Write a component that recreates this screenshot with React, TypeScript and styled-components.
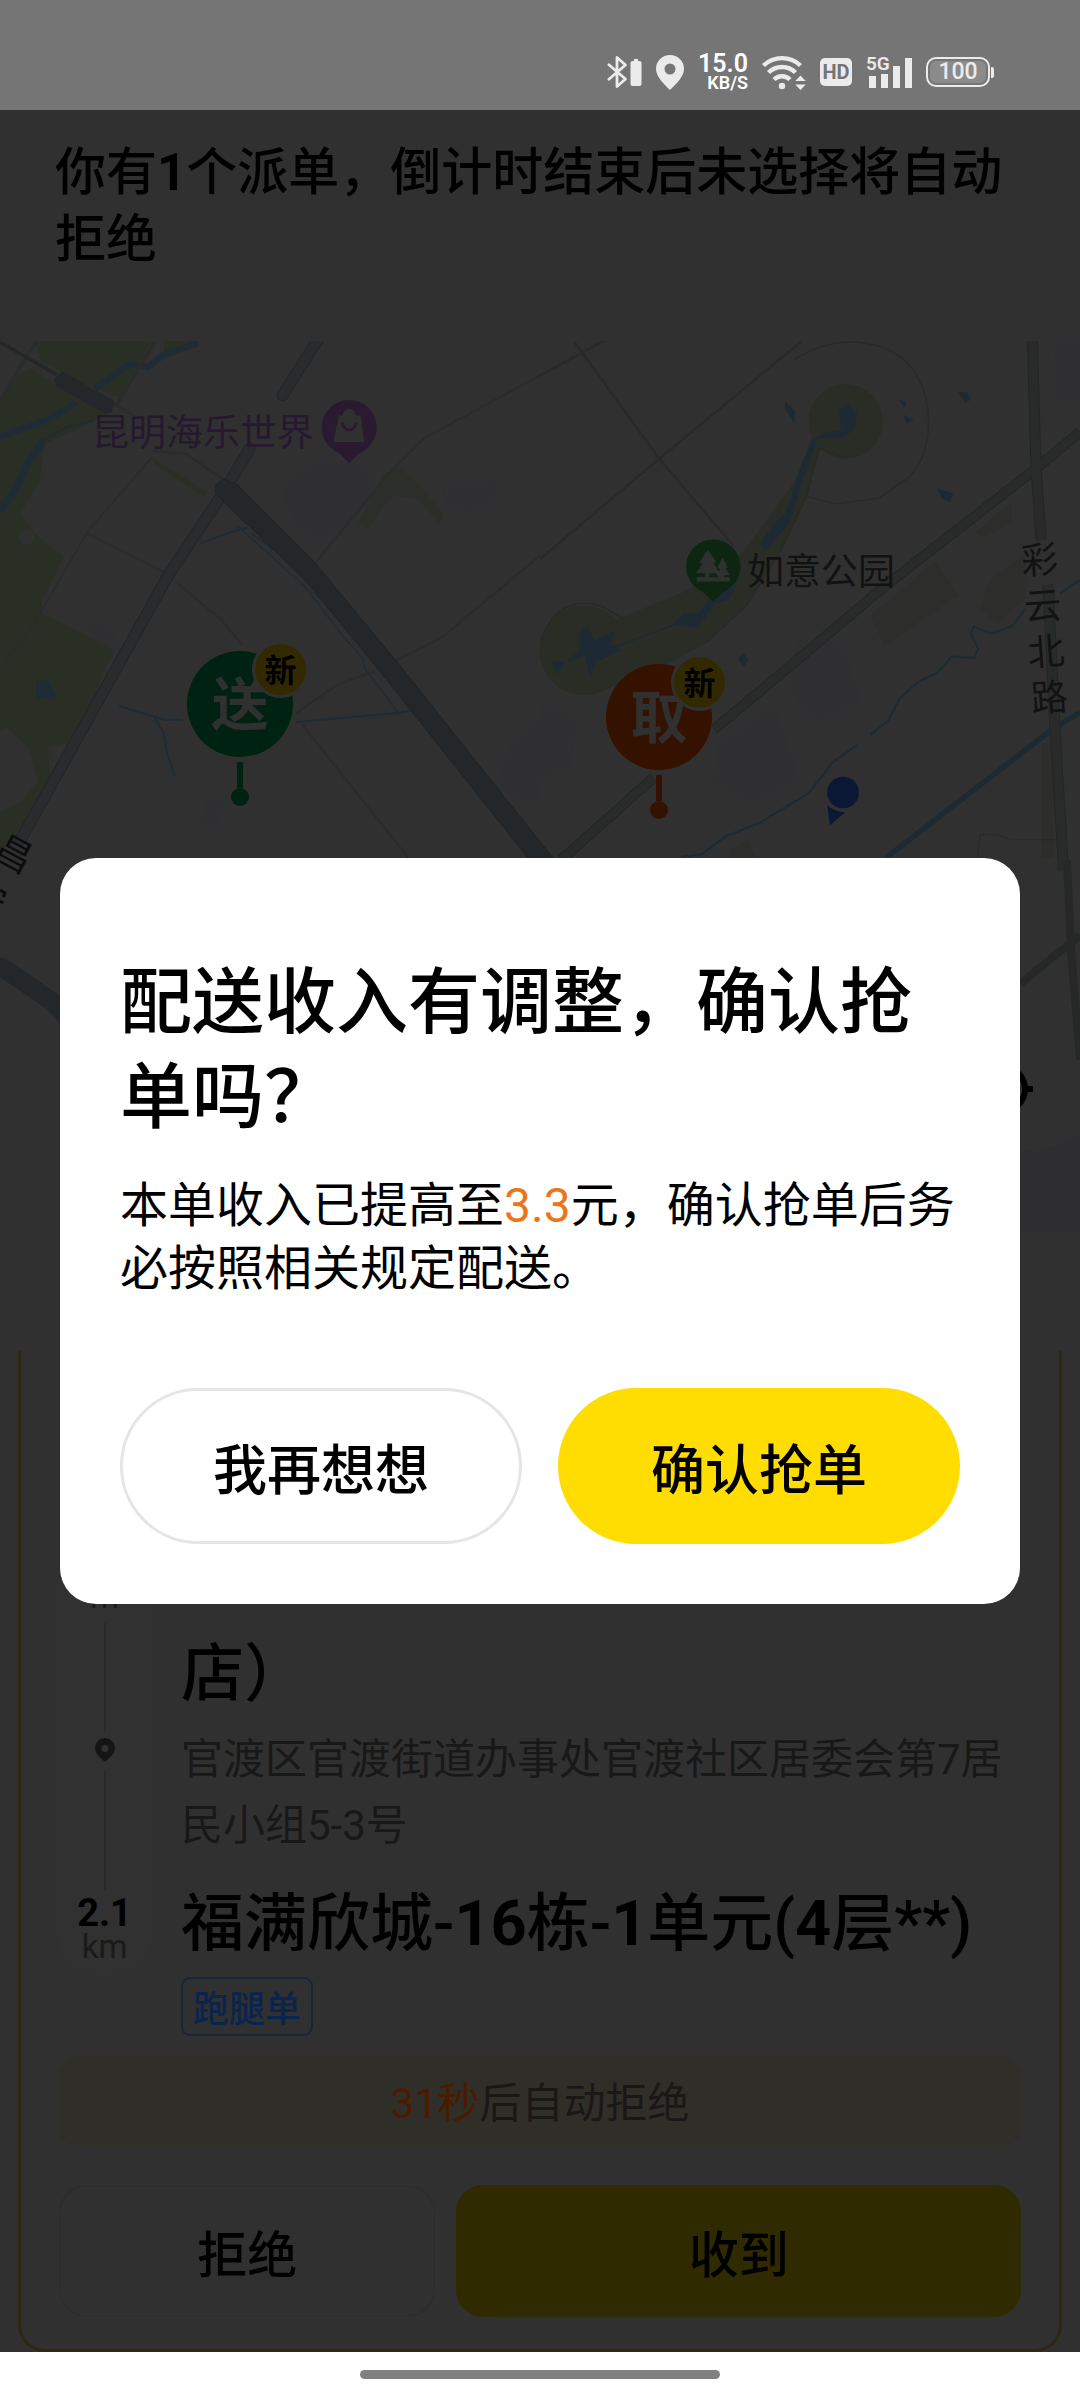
import React from 'react';
import styled, { createGlobalStyle } from 'styled-components';

const MIXED = `Roboto, "Noto Sans CJK SC", sans-serif`;
const CJK = `"Noto Sans CJK SC", sans-serif`;

const GlobalStyle = createGlobalStyle`
  *, *::before, *::after { box-sizing: border-box; }
  body { margin: 0; background: #fff; font-family: ${MIXED}; color: #000; }
  h1, h2, h3, p { margin: 0; }
  button { font: inherit; color: inherit; padding: 0; cursor: pointer; }
`;

const Screen = styled.div`
  display: flex;
  flex-direction: column;
  min-height: 100vh;
`;

/* ---------- status bar ---------- */

const StatusBar = styled.header`
  display: flex;
  align-items: center;
  justify-content: flex-end;
  gap: 14px;
  height: 110px;
  padding: 34px 86px 0 0;
  background: #757575;
  color: #ebebeb;
`;

const Speed = styled.div`
  display: flex;
  flex-direction: column;
  align-items: flex-end;
  font-weight: 600;
  font-size: 25px;
  line-height: 22px;
  color: #fff;
`;

const SpeedUnit = styled.span`
  font-size: 18px;
  line-height: 16px;
`;

const HdBadge = styled.span`
  width: 32px;
  border-radius: 5px;
  background: #ebebeb;
  color: #757575;
  font-size: 20px;
  font-weight: 700;
  line-height: 28px;
  text-align: center;
`;

const Signal = styled.span`
  position: relative;
  display: flex;
  width: 46px;
  height: 32px;
`;

const Network = styled.span`
  position: absolute;
  left: 0;
  top: 0;
  font-size: 19px;
  font-weight: 600;
  line-height: 16px;
`;

const Battery = styled.span`
  position: relative;
  width: 64px;
  margin-right: 4px;
  border: 2px solid #ebebeb;
  border-radius: 10px;
  background: #8b8b8b;
  box-shadow: inset 0 0 0 2px #757575;
  font-size: 23px;
  font-weight: 500;
  line-height: 26px;
  text-align: center;

  &::after {
    content: '';
    position: absolute;
    right: -6px;
    top: 8px;
    width: 3px;
    height: 11px;
    border-radius: 0 2px 2px 0;
    background: #ebebeb;
  }
`;

/* ---------- page below the dialog ---------- */

const Main = styled.main`
  position: relative;
  display: flex;
  flex: 1;
  flex-direction: column;
  background: #303030;
`;

const Digits = styled.b`
  font-weight: 700;
`;

const Notice = styled.h1`
  padding: 29px 55px 68px;
  font-size: 51px;
  font-weight: 500;
  line-height: 67px;
`;

const MapArea = styled.section`
  position: relative;
  height: 891px;
  overflow: hidden;
  background: #303030;
`;

const MapDrawing = styled.svg`
  display: block;
  width: 100%;
  height: 100%;
`;

const MapLabel = styled.span<{ $x: number; $y: number; $color: string }>`
  position: absolute;
  left: ${(p) => p.$x}px;
  top: ${(p) => p.$y}px;
  color: ${(p) => p.$color};
  font-size: 37px;
  line-height: 44px;
  white-space: nowrap;
`;

const RoadLabel = styled(MapLabel)<{ $turn: number }>`
  width: 37px;
  line-height: 46px;
  white-space: normal;
  word-break: break-all;
  transform: rotate(${(p) => p.$turn}deg);
`;

const Pin = styled.div<{ $x: number; $y: number; $color: string }>`
  position: absolute;
  left: ${(p) => p.$x}px;
  top: ${(p) => p.$y}px;
  display: flex;
  flex-direction: column;
  align-items: center;
  color: ${(p) => p.$color};
`;

const PinHead = styled.span`
  width: 106px;
  height: 106px;
  margin-bottom: 5px;
  border-radius: 50%;
  background: currentColor;
  font-family: ${CJK};
  font-size: 57px;
  font-weight: 700;
  line-height: 98px;
  text-align: center;
`;

const PinLetter = styled.span`
  color: #303030;
`;

const PinStem = styled.span`
  width: 6px;
  height: 26px;
  background: currentColor;
`;

const PinDot = styled.span`
  width: 18px;
  height: 18px;
  border-radius: 50%;
  background: currentColor;
`;

const NewBadge = styled.span`
  position: absolute;
  left: 65px;
  top: -10px;
  width: 57px;
  height: 57px;
  border: 3px solid #303030;
  border-radius: 50%;
  background: #332900;
  color: #000;
  font-family: ${CJK};
  font-size: 32px;
  font-weight: 700;
  line-height: 48px;
  text-align: center;
`;

const OrderCard = styled.section`
  display: flex;
  flex: 1;
  flex-direction: column;
  justify-content: flex-end;
  margin: 119px 18px 0;
  padding: 0 36px 32px;
  border: 3px solid #2d2812;
  border-top: 0;
  border-radius: 0 0 27px 27px;
`;

const Route = styled.div`
  display: flex;
  gap: 29px;
`;

const Track = styled.div`
  display: flex;
  flex-direction: column;
  align-items: center;
  width: 95px;
  margin-bottom: 61px;
  padding-bottom: 11px;
  border-radius: 0 0 40px 40px;
  background: #313131;
`;

const TrackLine = styled.span<{ $length: number }>`
  flex: ${(p) => p.$length};
  width: 2px;
  margin: 9px 0 6px;
  background: #292929;
`;

const Distance = styled.strong`
  font-size: 38px;
  font-weight: 700;
  line-height: 34px;
`;

const Unit = styled.span`
  color: #1a1a1a;
  font-size: 33px;
  line-height: 34px;
`;

const Stops = styled.div`
  flex: 1;
  padding-top: 54px;
`;

const StopName = styled.h2`
  font-size: 63px;
  font-weight: 500;
  line-height: 80px;
`;

const Address = styled.p`
  margin: 13px 0 25px;
  color: #181818;
  font-size: 42px;
  line-height: 66px;
`;

const Tag = styled.span`
  display: inline-block;
  margin-top: 13px;
  padding: 0 10px;
  border: 2px solid #1a2436;
  border-radius: 9px;
  color: #0a2450;
  font-family: ${CJK};
  font-size: 36px;
  font-weight: 500;
  line-height: 55px;
  vertical-align: top;
`;

const Countdown = styled.p`
  margin: 20px 0 38px;
  padding-top: 4px;
  border-radius: 24px;
  background: #302e29;
  color: #191816;
  font-size: 42px;
  line-height: 87px;
  text-align: center;
`;

const Seconds = styled.span`
  color: #4b1b00;
`;

const CardActions = styled.div`
  display: grid;
  grid-template-columns: 2fr 3fr;
  gap: 21px;
  padding: 0 2px;
`;

const CardButton = styled.button<{ $primary?: boolean }>`
  height: 132px;
  border: 2px solid ${(p) => (p.$primary ? '#302a00' : '#2d2d2d')};
  border-radius: 27px;
  background: ${(p) => (p.$primary ? '#302a00' : 'transparent')};
  font-family: ${CJK};
  font-size: 50px;
  font-weight: 500;
`;

/* ---------- dialog ---------- */

const Overlay = styled.div`
  position: absolute;
  inset: 0;
  display: flex;
  align-items: center;
  padding: 0 60px;
`;

const Dialog = styled.section`
  width: 100%;
  padding: 97px 60px 60px;
  border-radius: 36px;
  background: #fff;
`;

const DialogTitle = styled.h2`
  font-size: 72px;
  font-weight: 500;
  line-height: 95px;
`;

const DialogText = styled.p`
  margin: 29px 0 88px;
  font-size: 48px;
  line-height: 63px;
`;

const Amount = styled.span`
  color: #ec7419;
`;

const DialogActions = styled.div`
  display: flex;
  gap: 36px;
`;

const DialogButton = styled.button<{ $primary?: boolean }>`
  flex: 1;
  height: 156px;
  border: 3px solid ${(p) => (p.$primary ? '#ffdd00' : '#e5e5e5')};
  border-radius: 78px;
  background: ${(p) => (p.$primary ? '#ffdd00' : '#fff')};
  font-family: ${CJK};
  font-size: 54px;
  font-weight: 500;
`;

const NavBar = styled.footer`
  display: flex;
  justify-content: center;
  height: 48px;
  padding-top: 18px;
  background: #fff;
`;

const HomeHandle = styled.span`
  width: 33.3%;
  height: 9px;
  border-radius: 5px;
  background: #808080;
`;

/* ---------- drawings ---------- */

const BluetoothIcon = () => (
  <svg width="35" height="34" viewBox="0 0 35 34" aria-hidden="true">
    <path d="M1 9L18.500 24L10 31.500V2.500L18.500 10L1 25" fill="none" stroke="#ebebeb" strokeWidth="2.800" strokeLinejoin="round" />
    <path d="M27 4h4v2h1.500a2 2 0 0 1 2 2v21a2 2 0 0 1-2 2h-7a2 2 0 0 1-2-2V8a2 2 0 0 1 2-2H27z" fill="#ebebeb" />
  </svg>
);

const LocationIcon = () => (
  <svg width="28" height="35" viewBox="0 0 28 35" aria-hidden="true">
    <path fillRule="evenodd" d="M14 0a14 14 0 0 1 14 14c0 8-9 16-14 21C9 30 0 22 0 14A14 14 0 0 1 14 0zm0 8.500a5.500 5.500 0 1 0 0 11a5.500 5.500 0 0 0 0-11z" fill="#ebebeb" />
  </svg>
);

const WifiIcon = () => (
  <svg width="44" height="35" viewBox="0 0 44 35" aria-hidden="true">
    <g fill="none" stroke="#ebebeb" strokeWidth="4.400">
      <path d="M1.500 10.500a27 27 0 0 1 37 0" />
      <path d="M6.500 17.500a19.500 19.500 0 0 1 27 0" />
      <path d="M12 24.500a11.500 11.500 0 0 1 16 0" />
    </g>
    <circle cx="20" cy="31" r="3.200" fill="#ebebeb" />
    <path d="M38.500 20.500l5.200 5.500h-10.400zM38.500 35l5.200-5.500h-10.400z" fill="#ebebeb" />
  </svg>
);

const SignalBars = () => (
  <svg width="46" height="32" viewBox="0 0 46 32" fill="#ebebeb" aria-hidden="true">
    <path d="M3 20h7v12H3zM15 18h7v14h-7zM27 10h7v22h-7zM39 2h7v30h-7z" />
  </svg>
);

const StopPin = () => (
  <svg width="20" height="24" viewBox="0 0 20 24" aria-hidden="true">
    <path fillRule="evenodd" d="M10 0a10 10 0 0 1 10 10c0 6-6 10-10 14C6 20 0 16 0 10A10 10 0 0 1 10 0zm0 7a3.500 3.500 0 1 0 0 7a3.500 3.500 0 0 0 0-7z" fill="#151515" />
  </svg>
);

const CityMap = () => (
  <MapDrawing viewBox="0 341 1080 891" preserveAspectRatio="xMinYMin slice" aria-hidden="true">
    <g transform="translate(0 330) scale(.3444)" fill="none">
      <g fill="#2a2f25">
        <path d="M0 200L50 130L90 110L170 165L330 235L220 290L130 330L115 440L60 530L100 590L185 660L120 790L125 825L200 860L330 930L270 1070L200 1200L140 1210L145 1320L45 1480L0 1510V1400L60 1370L110 1310L80 1210L20 1155L0 1165Z" />
        <path d="M100 32H440L345 195L230 150L120 90ZM480 32H575L470 85ZM440 370L600 470L590 485L450 390Z" />
        <path d="M1040 560L1110 420L1160 400L1220 450L1290 540L1275 565L1215 490L1140 480L1065 580Z" opacity=".6" />
      </g>
      <g fill="#2f2f32">
        <path d="M840 430L930 370L1090 400L1080 500L930 610L850 560L830 480ZM1280 440L1360 460L1440 430L1440 490L1370 530L1290 500ZM600 1370L650 1350L640 1440L580 1430ZM1568 1130L1480 1200L1440 1330L1568 1380Z" />
        <path d="M250 850L330 860L350 930L270 900Z" />
      </g>
      <circle cx="77" cy="602" r="22" fill="#303030" />
      <g stroke="#1f2c35">
        <path d="M0 310L140 260L220 210" strokeWidth="18" />
        <path d="M275 170L380 98L430 108L470 75L575 38" strokeWidth="18" />
        <path d="M270 265L200 280L125 320" strokeWidth="6" />
        <path d="M125 320L75 395L45 465L0 525" strokeWidth="22" />
        <path d="M345 1092L440 1120L480 1132L530 1132M445 1120L475 1170L485 1230L508 1293M860 1138L1155 1112L1195 1105M580 620L690 580L720 575" strokeWidth="6" />
        <path d="M690 570L785 655L890 750L980 870L1050 950L1060 985L1155 1110M730 590L790 635L780 655" strokeWidth="4" />
      </g>
      <path d="M105 1020L140 1018L168 1065L155 1072L105 1070Z" fill="#1f2c35" />
      <g stroke="#2a2b2b" strokeWidth="6">
        <path d="M1568 132L1230 315L1140 405L920 670M1568 655L1280 895L1150 960M1090 990L980 1030L860 1112M875 1142L1185 1532M255 592L480 705M515 735L640 840L705 915" />
        <path d="M440 370L255 585L100 850L0 985" strokeWidth="4" />
        <path d="M105 32L0 205M450 32L340 215" strokeWidth="10" />
        <path d="M330 215L400 255M440 350L540 360L650 435" strokeWidth="8" />
      </g>
      <g stroke="#222425" strokeWidth="34">
        <path d="M650 470L490 710L60 1480M650 470L725 345M820 190L922 30" strokeLinecap="round" />
      </g>
      <g stroke="#292b2d" strokeWidth="29">
        <path d="M650 470L490 710L60 1480M650 470L725 345M820 190L922 30" strokeLinecap="round" />
      </g>
      <path d="M0 35L165 130" stroke="#252627" strokeWidth="10" />
      <path d="M155 145L180 120L330 205L325 240L305 242L165 165Z" fill="#23272a" />
      <path d="M625 450L650 432L690 450L910 670L1150 960L1605 1532L1640 1580H1570L1530 1530L1090 975L880 720L650 500L625 470Z" fill="#23272a" stroke="#1f2122" strokeWidth="2" />
      <circle cx="1014" cy="283" r="80" fill="#291a30" />
      <path d="M975 348L1014 386L1053 348Z" fill="#291a30" />
      <path d="M983 248H995A19 19 0 0 1 1033 248H1047L1058 325H969Z" fill="#303030" />
      <path d="M994 268A20 22 0 0 0 1034 268" stroke="#291a30" strokeWidth="8" />
    </g>
    <g transform="translate(540 330) scale(.3444)" fill="none">
      <g fill="#292d26">
        <circle cx="888" cy="265" r="108" />
        <circle cx="128" cy="930" r="130" />
        <path d="M790 310L740 440L600 630L540 700L420 760L235 835L100 900L150 1060L330 990L480 910L600 800L700 640L775 480L815 340Z" />
      </g>
      <g fill="#2d2e2b">
        <path d="M960 830L1150 670L1215 770L1000 915ZM1275 810L1310 720L1410 650V780L1330 850ZM1260 590L1370 500V560L1290 600ZM550 1510L600 1480L630 1530H550ZM1455 1200H1490V1532H1455Z" />
      </g>
      <path d="M1495 32H1568V210H1500ZM740 900L880 910L930 1080L800 1140L730 1060ZM520 1200L680 1090L750 1300L620 1380L500 1310ZM0 1090L110 1120L90 1270L0 1300Z" fill="#2f2f31" />
      <g fill="#1d2a33">
        <path d="M868 235L895 212L920 240L915 285L885 310L805 315L760 440L725 560L655 640L640 620L680 560L715 530L745 430L790 320L830 298L875 290ZM385 855L420 820L460 825L490 780L575 740L545 785L505 795L460 865Z" />
        <path d="M110 885L135 862L160 900L215 875L205 915L235 930L165 965L145 1010L130 945L75 965L50 1000L35 960L75 965L115 930Z" />
        <path d="M710 205L740 235L738 270L712 230ZM1215 180H1240L1252 200L1235 212ZM1155 460L1200 475L1190 500L1165 490ZM1055 245L1085 262L1065 272ZM1040 200L1065 210L1060 225ZM575 955L590 935L605 958L590 980Z" />
      </g>
      <g stroke="#1e2a32">
        <path d="M220 920L310 885L385 858" strokeWidth="4" />
        <path d="M410 1530L470 1522L540 1470L640 1430L780 1345L850 1255L920 1205M960 1175L1010 1135L1045 1070L1100 1020L1155 995L1195 948L1260 952L1272 925L1250 880L1260 862L1310 882L1370 860L1410 810M1510 765L1568 725" strokeWidth="6" />
        <path d="M1005 1532L1480 1165L1568 1110" strokeWidth="16" />
      </g>
      <g stroke="#282929">
        <path d="M100 35L345 372L560 625M0 132L185 32M0 665L345 375L760 32" strokeWidth="7" />
        <path d="M740 85C860 10 1000 20 1080 110C1150 210 1140 350 1075 425L985 488L860 505L775 483M810 340L775 480L700 640L600 800L480 910M810 345L895 372M5 900C40 790 120 780 185 805L235 835" strokeWidth="4" />
        <path d="M1270 1532L1278 1465H1325L1370 1480H1500" strokeWidth="3" />
      </g>
      <g stroke="#232525">
        <path d="M1568 295L1450 395L1000 745L745 960L505 1160M330 1300L60 1540" strokeWidth="30" />
        <path d="M1430 32L1440 400L1455 610M1475 740L1495 1150L1520 1568" strokeWidth="32" />
      </g>
      <g stroke="#292b2b">
        <path d="M1568 295L1450 395L1000 745L745 960L505 1160M330 1300L60 1540" strokeWidth="25" />
        <path d="M1430 32L1440 400L1455 610M1475 740L1495 1150L1520 1568" strokeWidth="27" />
      </g>
      <circle cx="503" cy="687" r="79" fill="#0c2611" />
      <path d="M450 740L503 788L556 740Z" fill="#0c2611" />
      <path d="M487 638L513 675H503L522 706H492V718H520L510 706L525 695L515 690L530 660L545 690L538 692L552 712H535V718H552V730H455V718H480V706H453L472 676H462Z" fill="#303030" />
      <circle cx="880" cy="1343" r="46" fill="#0a1836" />
      <path d="M834 1380Q855 1400 886 1400L842 1438Z" fill="#0a1836" />
    </g>
    <path d="M0 957L10 961L60 996V1023L45 1008L0 977Z" fill="#23272a" />
    <path d="M1020 984L1080 935M1067 860L1071 950L1080 1060" fill="none" stroke="#262828" strokeWidth="8" />
    <path d="M0 890L5 893L3 897M0 901L3 903" fill="none" stroke="#0c0c0c" strokeWidth="3" />
    <path d="M1020 1150C1060 1150 1062 1140 1080 1136V1232H1020Z" fill="#2e2e31" />
    <circle cx="1003" cy="1089" r="22" fill="none" stroke="#000" strokeWidth="6" />
    <path d="M1025 1089H1033" stroke="#000" strokeWidth="6" />
  </MapDrawing>
);

const DeliveryPin = ({ x, y, color, children }: { x: number; y: number; color: string; children: string }) => (
  <Pin $x={x} $y={y} $color={color}>
    <PinHead>
      <PinLetter>{children}</PinLetter>
    </PinHead>
    <PinStem />
    <PinDot />
    <NewBadge>新</NewBadge>
  </Pin>
);

export default function App() {
  return (
    <Screen>
      <GlobalStyle />
      <StatusBar>
        <BluetoothIcon />
        <LocationIcon />
        <Speed>
          15.0
          <SpeedUnit>KB/S</SpeedUnit>
        </Speed>
        <WifiIcon />
        <HdBadge>HD</HdBadge>
        <Signal>
          <SignalBars />
          <Network>5G</Network>
        </Signal>
        <Battery>100</Battery>
      </StatusBar>

      <Main>
        <Notice>
          你有<Digits>1</Digits>个派单，倒计时结束后未选择将自动拒绝
        </Notice>

        <MapArea>
          <CityMap />
          <MapLabel $x={92} $y={71} $color="#26182f">昆明海乐世界</MapLabel>
          <MapLabel $x={747} $y={210} $color="#121212">如意公园</MapLabel>
          <RoadLabel $x={1026} $y={197} $color="#121212" $turn={-4}>彩云北路</RoadLabel>
          <RoadLabel $x={-5} $y={491} $color="#0c0c0c" $turn={28}>昌</RoadLabel>
          <DeliveryPin x={187} y={310} color="#002213">送</DeliveryPin>
          <DeliveryPin x={606} y={323} color="#351200">取</DeliveryPin>
        </MapArea>

        <OrderCard>
          <Route>
            <Track>
              <Unit>m</Unit>
              <TrackLine $length={12} />
              <StopPin />
              <TrackLine $length={13} />
              <Distance>2.1</Distance>
              <Unit>km</Unit>
            </Track>
            <Stops>
              <StopName>店）</StopName>
              <Address>官渡区官渡街道办事处官渡社区居委会第7居民小组5-3号</Address>
              <StopName>
                福满欣城-<Digits>16</Digits>栋-<Digits>1</Digits>单元(<Digits>4</Digits>层**)
              </StopName>
              <Tag>跑腿单</Tag>
            </Stops>
          </Route>
          <Countdown>
            <Seconds>31秒</Seconds>后自动拒绝
          </Countdown>
          <CardActions>
            <CardButton type="button">拒绝</CardButton>
            <CardButton type="button" $primary>收到</CardButton>
          </CardActions>
        </OrderCard>

        <Overlay>
          <Dialog role="dialog" aria-modal="true" aria-labelledby="dialog-title">
            <DialogTitle id="dialog-title">配送收入有调整，确认抢单吗？</DialogTitle>
            <DialogText>
              本单收入已提高至<Amount>3.3</Amount>元，确认抢单后务必按照相关规定配送。
            </DialogText>
            <DialogActions>
              <DialogButton type="button">我再想想</DialogButton>
              <DialogButton type="button" $primary>确认抢单</DialogButton>
            </DialogActions>
          </Dialog>
        </Overlay>
      </Main>

      <NavBar>
        <HomeHandle />
      </NavBar>
    </Screen>
  );
}
